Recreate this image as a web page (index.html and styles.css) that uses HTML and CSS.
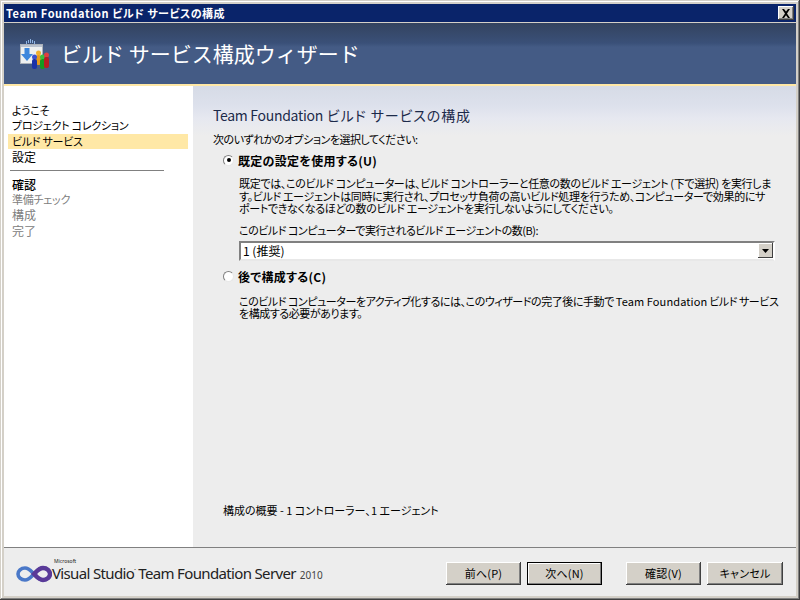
FILE: index.html
```html
<!DOCTYPE html>
<html lang="ja">
<head>
<meta charset="utf-8">
<title>ビルド サービス構成ウィザード</title>
<link rel="stylesheet" href="styles.css">
</head>
<body>
<div class="window">
  <div class="titlebar">
    <span class="title-text"><span class="latin-title">Team Foundation</span> ビルド サービスの構成</span>
    <span class="close"><svg width="10" height="9" viewBox="0 0 10 9"><path d="M1 0h2l2 2.500L7 0h2L6 4.500 9 9H7L5 6.300 3 9H1l3-4.500z" fill="#000"/></svg></span>
  </div>
  <header class="banner">
    <svg class="banner-icon" width="30" height="32" viewBox="0 0 30 32">
      <g fill="#8fb4e4"><rect x="6" y="2" width="1" height="3"/><rect x="8" y="1" width="1" height="3"/><rect x="10" y="0" width="1" height="4"/><rect x="12" y="1" width="1" height="3"/><rect x="14" y="2" width="1" height="3"/></g>
      <rect x="0.500" y="5.500" width="22" height="19" fill="#eef0f0" stroke="#aab0b8"/>
      <rect x="1" y="6" width="21" height="2" fill="#b9c2d0"/>
      <path d="M4.500 9h5v6h3.500l-6 7-6-7h3.500z" fill="#3c86dc"/>
      <circle cx="18.500" cy="14" r="2.500" fill="#f0b030"/><rect x="16" y="16" width="5" height="10" rx="2" fill="#e69a1c"/>
      <circle cx="14.500" cy="18" r="2.500" fill="#3a50d0"/><rect x="12" y="20" width="5" height="10" rx="2" fill="#1c32a8"/>
      <circle cx="22.500" cy="18" r="2.500" fill="#3cc040"/><rect x="20" y="20" width="5" height="10" rx="2" fill="#169a20"/>
      <circle cx="26.500" cy="16" r="2.500" fill="#e04040"/><rect x="24" y="18" width="5" height="11" rx="2" fill="#b81c22"/>
    </svg>
    <h1 class="banner-title">ビルド サービス構成ウィザード</h1>
  </header>
  <div class="accent"></div>
  <div class="body">
    <nav class="side">
      <div class="nav-item">ようこそ</div>
      <div class="nav-item">プロジェクト コレクション</div>
      <div class="nav-item current">ビルド サービス</div>
      <div class="nav-item kanji">設定</div>
      <div class="nav-rule"></div>
      <div class="nav-item kanji strong">確認</div>
      <div class="nav-item off">準備チェック</div>
      <div class="nav-item kanji off">構成</div>
      <div class="nav-item kanji off">完了</div>
    </nav>
    <main class="main">
      <h2 class="page-title"><span class="latin-page">Team Foundation</span> ビルド サービスの構成</h2>
      <p class="prompt">次のいずれかのオプションを選択してください:</p>
      <div class="option">
        <span class="radio checked"></span><span class="option-label">既定の設定を使用する(U)</span>
      </div>
      <div class="detail">
        <p class="para">既定では、このビルド コンピューターは、ビルド コントローラーと任意の数のビルド エージェント (下で選択) を実行しま<br>す。ビルド エージェントは同時に実行され、プロセッサ負荷の高いビルド処理を行うため、コンピューターで効果的にサ<br>ポートできなくなるほどの数のビルド エージェントを実行しないようにしてください。</p>
        <p class="field-label">このビルド コンピューターで実行されるビルド エージェントの数(B):</p>
        <div class="select"><span class="select-value">1 (推奨)</span><span class="select-btn"><svg width="7" height="4" viewBox="0 0 7 4"><path d="M0 0h7L3.500 4z" fill="#000"/></svg></span></div>
      </div>
      <div class="option second">
        <span class="radio"></span><span class="option-label">後で構成する(C)</span>
      </div>
      <div class="detail last">
        <p class="para">このビルド コンピューターをアクティブ化するには、このウィザードの完了後に手動で <span class="latin">Team Foundation</span> ビルド サービス<br>を構成する必要があります。</p>
      </div>
      <p class="summary">構成の概要 - 1 コントローラー、1 エージェント</p>
    </main>
  </div>
  <footer class="footer">
    <div class="brand">
      <svg class="brand-logo" width="36" height="18" viewBox="0 0 36 18">
        <path d="M9 3c4 0 6 3 9 6s5 6 9 6 7-3 7-6-3-6-7-6-6 3-9 6-5 6-9 6-7-3-7-6 3-6 7-6z" fill="none" stroke="#4a78c8" stroke-width="3.600"/>
        <path d="M18 9c3-3 5-6 9-6s7 3 7 6-3 6-7 6-6-3-9-6z" fill="none" stroke="#5a3a98" stroke-width="4.400"/>
      </svg>
      <div class="brand-text"><span class="brand-ms">Microsoft</span><span class="brand-name">Visual Studio<sup class="tm">&#8226;</sup> Team Foundation Server</span><span class="brand-year">2010</span></div>
    </div>
    <div class="buttons">
      <button class="btn">前へ(P)</button>
      <button class="btn default">次へ(N)</button>
      <button class="btn gap">確認(V)</button>
      <button class="btn wide">キャンセル</button>
    </div>
  </footer>
</div>
</body>
</html>
```
FILE: styles.css
```css
* { box-sizing: border-box; }
html, body { margin: 0; padding: 0; }
body {
  width: 800px;
  height: 600px;
  overflow: hidden;
  font-family: "Noto Sans CJK JP", "Liberation Sans", sans-serif;
  font-size: 11px;
  font-feature-settings: "palt";
  color: #000;
}
p, h1, h2 { margin: 0; font-weight: normal; }
.window {
  width: 800px;
  height: 600px;
  display: flex;
  flex-direction: column;
  padding: 4px;
  background: #d4d0c8;
  box-shadow: inset -1px -1px 0 #404040, inset 1px 1px 0 #d4d0c8, inset -2px -2px 0 #808080, inset 2px 2px 0 #fff;
}
.titlebar {
  height: 18px;
  flex: none;
  background: #0a246a;
  color: #fff;
  display: flex;
  align-items: center;
  justify-content: space-between;
  padding: 0 2px;
  font-size: 11px;
  font-weight: bold;
  letter-spacing: 0.5px;
}
.latin-title { letter-spacing: 0.6px; }
.close {
  width: 16px;
  height: 14px;
  background: #d4d0c8;
  box-shadow: inset -1px -1px 0 #404040, inset 1px 1px 0 #fff, inset -2px -2px 0 #808080;
  display: flex;
  align-items: center;
  justify-content: center;
}
.banner {
  height: 62px;
  flex: none;
  border-top: 1px solid #d4d0c8;
  background: linear-gradient(#33435f, #3a5078 20px, #445b85 24px, #445b85);
  display: flex;
  align-items: center;
  color: #fff;
  padding: 0 0 0 16px;
  gap: 11px;
}
.banner-icon { margin-top: 3px; }
.banner-title { font-size: 21px; line-height: 28px; font-weight: 400; font-feature-settings: normal; margin-top: -1px; }
.accent { height: 2px; flex: none; background: #ffe8a6; }
.body { flex: 1; display: flex; min-height: 0; }
.side {
  width: 189px;
  flex: none;
  background: #fff;
  padding: 17px 0 0 4px;
}
.nav-item {
  height: 15px;
  line-height: 15px;
  margin-bottom: 0.3px;
  padding-left: 4px;
  width: 180px;
  letter-spacing: -0.25px;
}
.nav-item.kanji { font-size: 12px; letter-spacing: 0; }
.nav-item.strong { font-weight: 500; }
.nav-item.current { background: #ffe8a6; }
.nav-item.off { color: #808080; }
.nav-rule { height: 1px; width: 154px; background: #808080; margin: 6px 0 6px 2px; }
.main {
  flex: 1;
  min-width: 0;
  background: linear-gradient(#d6dbe6, #dde1ec 20px, #e6e8f0 32px, #ededed 50px);
  display: flex;
  flex-direction: column;
  padding: 0 0 0 20px;
}
.page-title {
  margin-top: 20px;
  font-size: 14px;
  line-height: 18px;
  color: #1c2a4a;
  letter-spacing: 0.9px;
}
.latin-page { letter-spacing: -0.3px; }
.latin { letter-spacing: 0.1px; }
.prompt { margin-top: 8px; line-height: 14px; letter-spacing: -0.5px; }
.option { display: flex; align-items: center; gap: 4px; margin: 7px 0 0 10px; height: 14px; }
.option.second { margin-top: 9px; }
.option-label { font-size: 12px; font-weight: bold; letter-spacing: 0.3px; }
.radio {
  width: 11px;
  height: 11px;
  flex: none;
  border-radius: 50%;
  background: #fff;
  border: 1px solid;
  border-color: #808080 #e8e8e8 #e8e8e8 #808080;
  display: flex;
  align-items: center;
  justify-content: center;
}
.radio.checked::after { content: ""; width: 4px; height: 4px; border-radius: 50%; background: #000; }
.detail { margin: 10px 0 0 26px; width: 536px; }
.detail.last { margin-top: 11px; }
.detail.last .para { letter-spacing: -0.45px; }
.para { line-height: 12.5px; white-space: nowrap; letter-spacing: -0.33px; }
.field-label { margin-top: 8px; line-height: 14px; letter-spacing: -0.45px; }
.select {
  margin-top: 4px;
  width: 536px;
  height: 20px;
  display: flex;
  align-items: center;
  background: #fff;
  border: 2px solid #808080;
  border-right-color: #fff;
  border-bottom-color: #e8e8e8;
  padding-left: 2px;
  justify-content: space-between;
  font-size: 12px;
}
.select-btn {
  width: 15px;
  height: 15px;
  background: #d4d0c8;
  box-shadow: inset -1px -1px 0 #404040, inset 1px 1px 0 #fff;
  display: flex;
  align-items: center;
  justify-content: center;
}
.summary { margin: auto 0 30px 10px; line-height: 14px; }
.footer {
  height: 49px;
  flex: none;
  background: #ededed;
  border-top: 1px solid #808080;
  display: flex;
  align-items: center;
  justify-content: space-between;
  padding: 0 13px 0 12px;
}
.brand { display: flex; align-items: center; margin-top: 3px; }
.brand-logo { flex: none; }
.brand-text { position: relative; font-family: "Noto Sans", "Liberation Sans", sans-serif; white-space: nowrap; color: #222; line-height: 16px; }
.brand-ms { position: absolute; left: 2px; top: -7px; font-size: 5px; line-height: 6px; }
.brand-name { font-size: 15px; letter-spacing: -0.65px; line-height: 16px; }
.tm { font-size: 4px; vertical-align: 8px; line-height: 0; }
.brand-year { font-size: 10px; color: #444; margin-left: 4px; }
.buttons { display: flex; gap: 6px; margin-top: 2px; }
.btn {
  width: 75px;
  height: 23px;
  background: #d4d0c8;
  border: 0;
  padding: 0;
  font: 11px "Noto Sans CJK JP", "Liberation Sans", sans-serif;
  font-feature-settings: "palt";
  letter-spacing: 0.2px;
  color: #000;
  box-shadow: inset -1px -1px 0 #404040, inset 1px 1px 0 #fff, inset -2px -2px 0 #808080;
}
.btn.default { box-shadow: inset 0 0 0 1px #000, inset -2px -2px 0 #808080, inset 2px 2px 0 #fff; }
.btn.gap { margin-left: 18px; }
.btn.wide { width: 76px; }
```
